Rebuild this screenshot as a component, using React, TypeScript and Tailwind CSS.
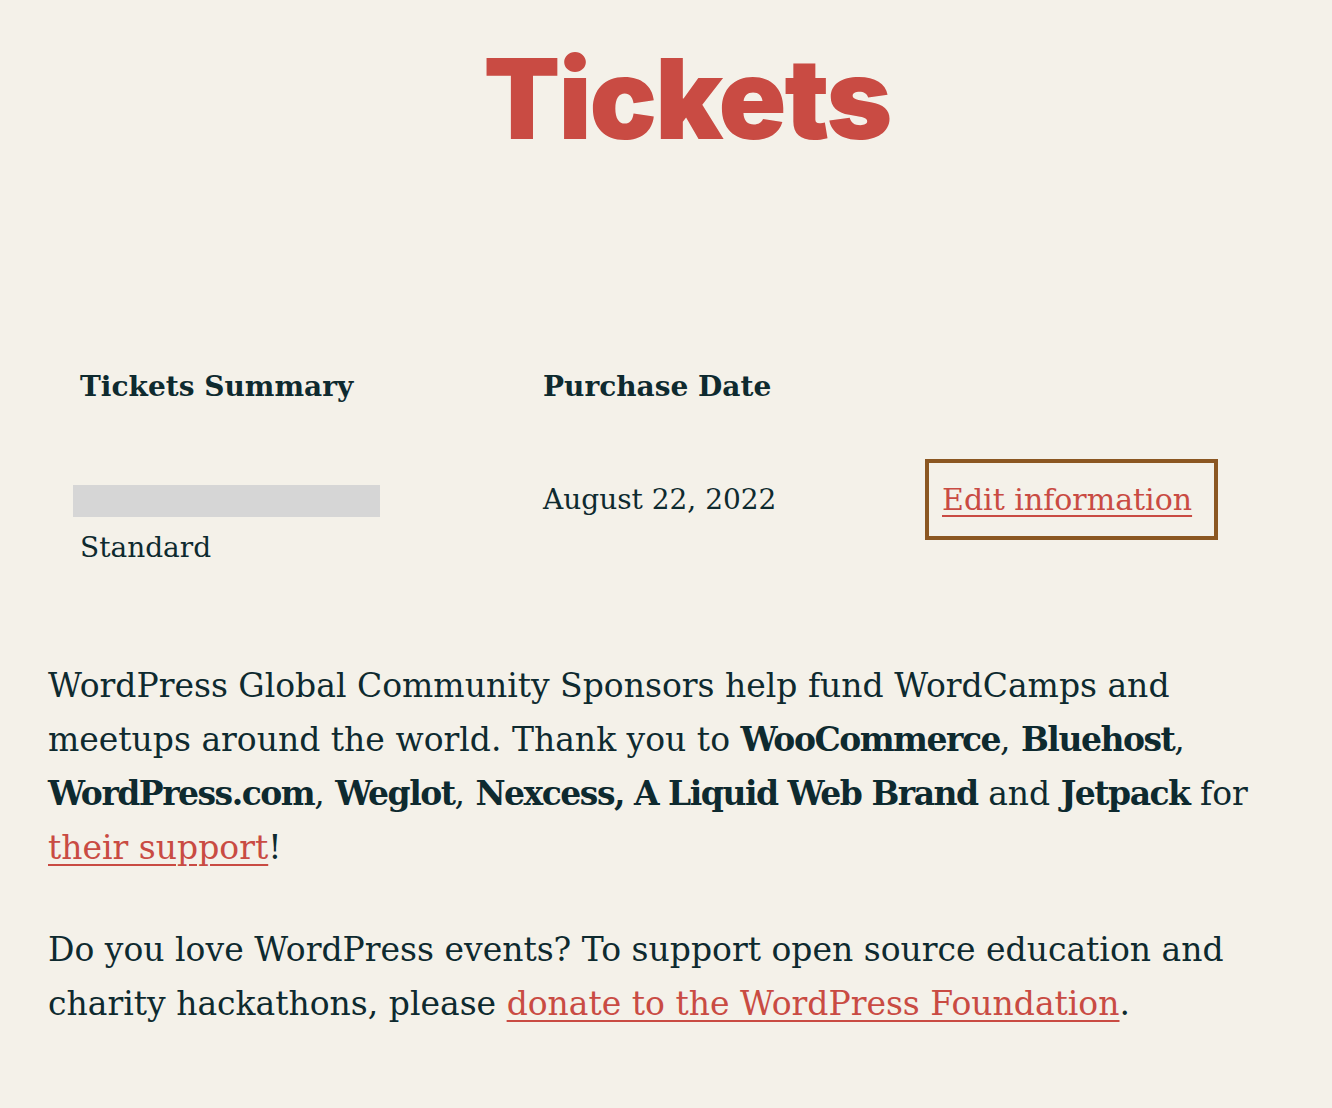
export default function App() {
  return (
    <div className="min-h-[1108px] w-full bg-[#f4f1e9] text-[#0e2a2f] font-['DejaVu_Serif',serif]">
      <div className="mx-auto w-[1332px] px-12 pt-[28px] pb-16">
        <h1 className="pl-[42px] text-center font-['Inter',sans-serif] text-[112px] font-black leading-[140px] tracking-[-2px] text-[#c94b43]">
          Tickets
        </h1>

        <div className="mt-[199px] grid grid-cols-[463px_399px_1fr] text-[28px]">
          <div className="pl-8 font-bold leading-[40px]">Tickets Summary</div>
          <div className="pl-8 font-bold leading-[40px]">Purchase Date</div>
          <div />

          <div className="pt-[78px]">
            <div className="ml-[25px] h-8 w-[307px] bg-[#d6d6d6]" />
            <div className="pl-8 pt-[11px] leading-[40px]">Standard</div>
          </div>
          <div className="pl-8 pt-[73px] leading-[40px]">August 22, 2022</div>
          <div className="pt-[52px]">
            <div className="ml-[15px] inline-block border-4 border-[#8b5722] pl-[13px] pr-[22px] pt-[17px] pb-[16px] text-[30px] leading-[40px]">
              <a href="#" className="text-[#c94b43] underline underline-offset-[5px] decoration-2">
                Edit information
              </a>
            </div>
          </div>
        </div>

        <p className="mt-[91px] text-[33px] leading-[54px]">
          WordPress Global Community Sponsors help fund WordCamps and meetups around the world. Thank you to{" "}
          <strong className="tracking-[-1.5px]">WooCommerce</strong>, <strong className="tracking-[-1.5px]">Bluehost</strong>,{" "}
          <strong className="tracking-[-1.5px]">WordPress.com</strong>, <strong className="tracking-[-1.5px]">Weglot</strong>,{" "}
          <strong className="tracking-[-1.5px]">Nexcess, A Liquid Web Brand</strong> and{" "}
          <strong className="tracking-[-1.5px]">Jetpack</strong> for{" "}
          <a href="#" className="text-[#c94b43] underline underline-offset-[5px] decoration-2">
            their support
          </a>
          !
        </p>

        <p className="mt-12 text-[33px] leading-[54px]">
          Do you love WordPress events? To support open source education and charity hackathons, please{" "}
          <a href="#" className="text-[#c94b43] underline underline-offset-[5px] decoration-2">
            donate to the WordPress Foundation
          </a>
          .
        </p>
      </div>
    </div>
  );
}
